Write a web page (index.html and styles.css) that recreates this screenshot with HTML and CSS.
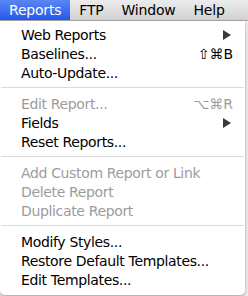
FILE: index.html
```html
<!DOCTYPE html>
<html lang="en">
<head>
    <meta charset="UTF-8">
    <title>Reports menu</title>
    <link rel="stylesheet" href="styles.css">
</head>
<body>

    <div class="menubar">
        <span class="bar-item active">Reports</span>
        <span class="bar-item">FTP</span>
        <span class="bar-item">Window</span>
        <span class="bar-item">Help</span>
    </div>

    <div class="menu">
        <div class="item"><span>Web Reports</span><svg class="arrow" width="8" height="10" viewBox="0 0 8 10"><path d="M0 0 L8 5 L0 10 Z"/></svg></div>
        <div class="item"><span>Baselines...</span><span class="key">&#8679;&#8984;B</span></div>
        <div class="item"><span>Auto-Update...</span></div>
        <div class="sep"></div>
        <div class="item off"><span>Edit Report...</span><span class="key">&#8997;&#8984;R</span></div>
        <div class="item"><span>Fields</span><svg class="arrow" width="8" height="10" viewBox="0 0 8 10"><path d="M0 0 L8 5 L0 10 Z"/></svg></div>
        <div class="item"><span>Reset Reports...</span></div>
        <div class="sep"></div>
        <div class="item off"><span>Add Custom Report or Link</span></div>
        <div class="item off"><span>Delete Report</span></div>
        <div class="item off"><span>Duplicate Report</span></div>
        <div class="sep"></div>
        <div class="item"><span>Modify Styles...</span></div>
        <div class="item"><span>Restore Default Templates...</span></div>
        <div class="item"><span>Edit Templates...</span></div>
    </div>

</body>
</html>
```
FILE: styles.css
```css
body {
    margin: 0;
    width: 248px;
    height: 296px;
    overflow: hidden;
    background: #f7f1f2;
    font-family: 'DejaVu Sans', sans-serif;
    font-size: 14px;
    color: #000;
}
.menubar {
    display: flex;
    height: 21px;
    background: linear-gradient(#ececec, #d2d2d2);
    border-bottom: 1px solid #a8a8a8;
    box-sizing: border-box;
}
.bar-item {
    display: flex;
    align-items: center;
    padding: 0 9px;
    font-size: 14px;
    letter-spacing: -0.2px;
}
.bar-item.active {
    color: white;
    background: linear-gradient(#5a86f5, #2458ea);
}
.menu {
    width: 245px;
    padding: 4px 0 6px;
    background: rgba(255, 255, 255, 0.97);
    border-radius: 0 0 5px 5px;
    box-shadow: 0 2px 4px rgba(0, 0, 0, 0.35);
    box-sizing: border-box;
}
.item {
    display: flex;
    justify-content: space-between;
    align-items: center;
    height: 19px;
    padding: 0 12px 0 21px;
    letter-spacing: -0.35px;
}
.off {
    color: #9c9c9c;
}
.arrow {
    fill: #3a3a3a;
    margin-right: 2px;
}
.key {
    font-size: 14px;
    letter-spacing: 0;
}
.sep {
    height: 1px;
    margin: 5px 1px 6px;
    background: #dadada;
}
```
